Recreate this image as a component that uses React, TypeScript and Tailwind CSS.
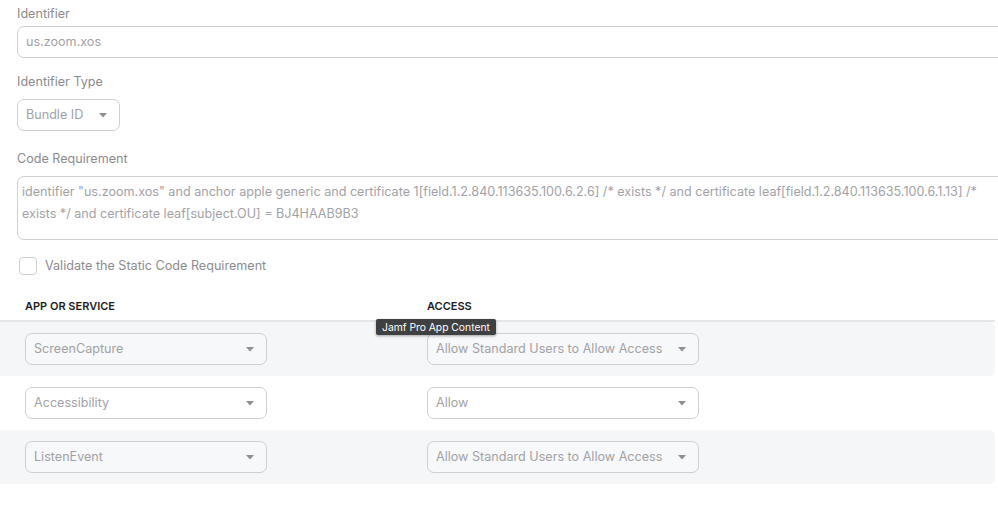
import { type ReactNode } from "react";

const font = { fontFamily: "Inter, 'Noto Sans', sans-serif" };

function Caret() {
  return (
    <svg width="8" height="5" viewBox="0 0 8 5" className="flex-shrink-0">
      <path d="M0 0h8L4 4.5z" fill="#8e8e93" />
    </svg>
  );
}

function Select({
  value,
  className,
  tinted,
}: {
  value: string;
  className: string;
  tinted?: boolean;
}) {
  return (
    <div
      className={`flex h-[32px] items-center justify-between rounded-[7px] border border-[#cfcfd1] pl-[8px] pr-[12px] pt-[1px] text-[12.6px] text-[#a2a2a6] ${
        tinted ? "bg-[#f7f8f9]" : "bg-white"
      } ${className}`}
    >
      <span>{value}</span>
      <Caret />
    </div>
  );
}

function Label({ children, className }: { children: ReactNode; className?: string }) {
  return (
    <div className={`h-[16px] text-[12.6px] leading-[16px] text-[#8b8b8f] ${className ?? ""}`}>
      {children}
    </div>
  );
}

const rows = [
  { app: "ScreenCapture", access: "Allow Standard Users to Allow Access" },
  { app: "Accessibility", access: "Allow" },
  { app: "ListenEvent", access: "Allow Standard Users to Allow Access" },
];

export default function App() {
  return (
    <div
      className="relative h-[506px] w-[998px] overflow-hidden bg-white"
      style={font}
    >
      {/* Form fields */}
      <div className="flex flex-col pl-[17px] pt-[6px]">
        <Label>Identifier</Label>
        <div className="mt-[4px] flex h-[32px] w-[1000px] items-center rounded-[7px] border border-[#cfcfd1] px-[8px] pt-[1px] text-[12.6px] text-[#a2a2a6]">
          us.zoom.xos
        </div>

        <Label className="mt-[16px]">Identifier Type</Label>
        <Select value="Bundle ID" className="mt-[9px] w-[103px]" />

        <Label className="mt-[20px]">Code Requirement</Label>
        <div className="mt-[9px] h-[64px] w-[1000px] rounded-[7px] border border-[#cfcfd1] px-[4px] pt-[4px] text-[12.6px] leading-[22px] text-[#a2a2a6]">
          identifier "us.zoom.xos" and anchor apple generic and certificate
          1[field.1.2.840.113635.100.6.2.6] /* exists */ and certificate
          leaf[field.1.2.840.113635.100.6.1.13] /*
          <br />
          exists */ and certificate leaf[subject.OU] = BJ4HAAB9B3
        </div>

        <div className="mt-[17px] flex items-center gap-[8px] pl-[2px]">
          <div className="size-[18px] rounded-[4px] border border-[#cfcfd1] bg-white" />
          <span className="text-[12.6px] text-[#8b8b8f]">
            Validate the Static Code Requirement
          </span>
        </div>
      </div>

      {/* App / service table */}
      <div className="mt-[22px] w-[995px]">
        <div className="flex border-b-2 border-[#e6e6e8] pb-[6px] text-[11px] font-semibold leading-[16px] text-[#1c1c1e]">
          <div className="w-[427px] pl-[25px]">APP OR SERVICE</div>
          <div>ACCESS</div>
        </div>
        {rows.map((row, i) => (
          <div
            key={row.app}
            className={`flex h-[54px] items-center rounded-r-[6px] ${
              i % 2 === 0 ? "bg-[#f5f6f8]" : "bg-white"
            }`}
          >
            <div className="w-[427px] pl-[25px]">
              <Select value={row.app} tinted={i % 2 === 0} className="w-[242px]" />
            </div>
            <Select value={row.access} tinted={i % 2 === 0} className="w-[272px]" />
          </div>
        ))}
      </div>

      {/* Tooltip */}
      <div className="absolute left-[376px] top-[319px] rounded-[2px] bg-[#3f4041] px-[6px] py-[1px] text-[10.3px] leading-[14px] text-white shadow-[0_1px_3px_rgba(0,0,0,0.35)]">
        Jamf Pro App Content
      </div>
    </div>
  );
}
